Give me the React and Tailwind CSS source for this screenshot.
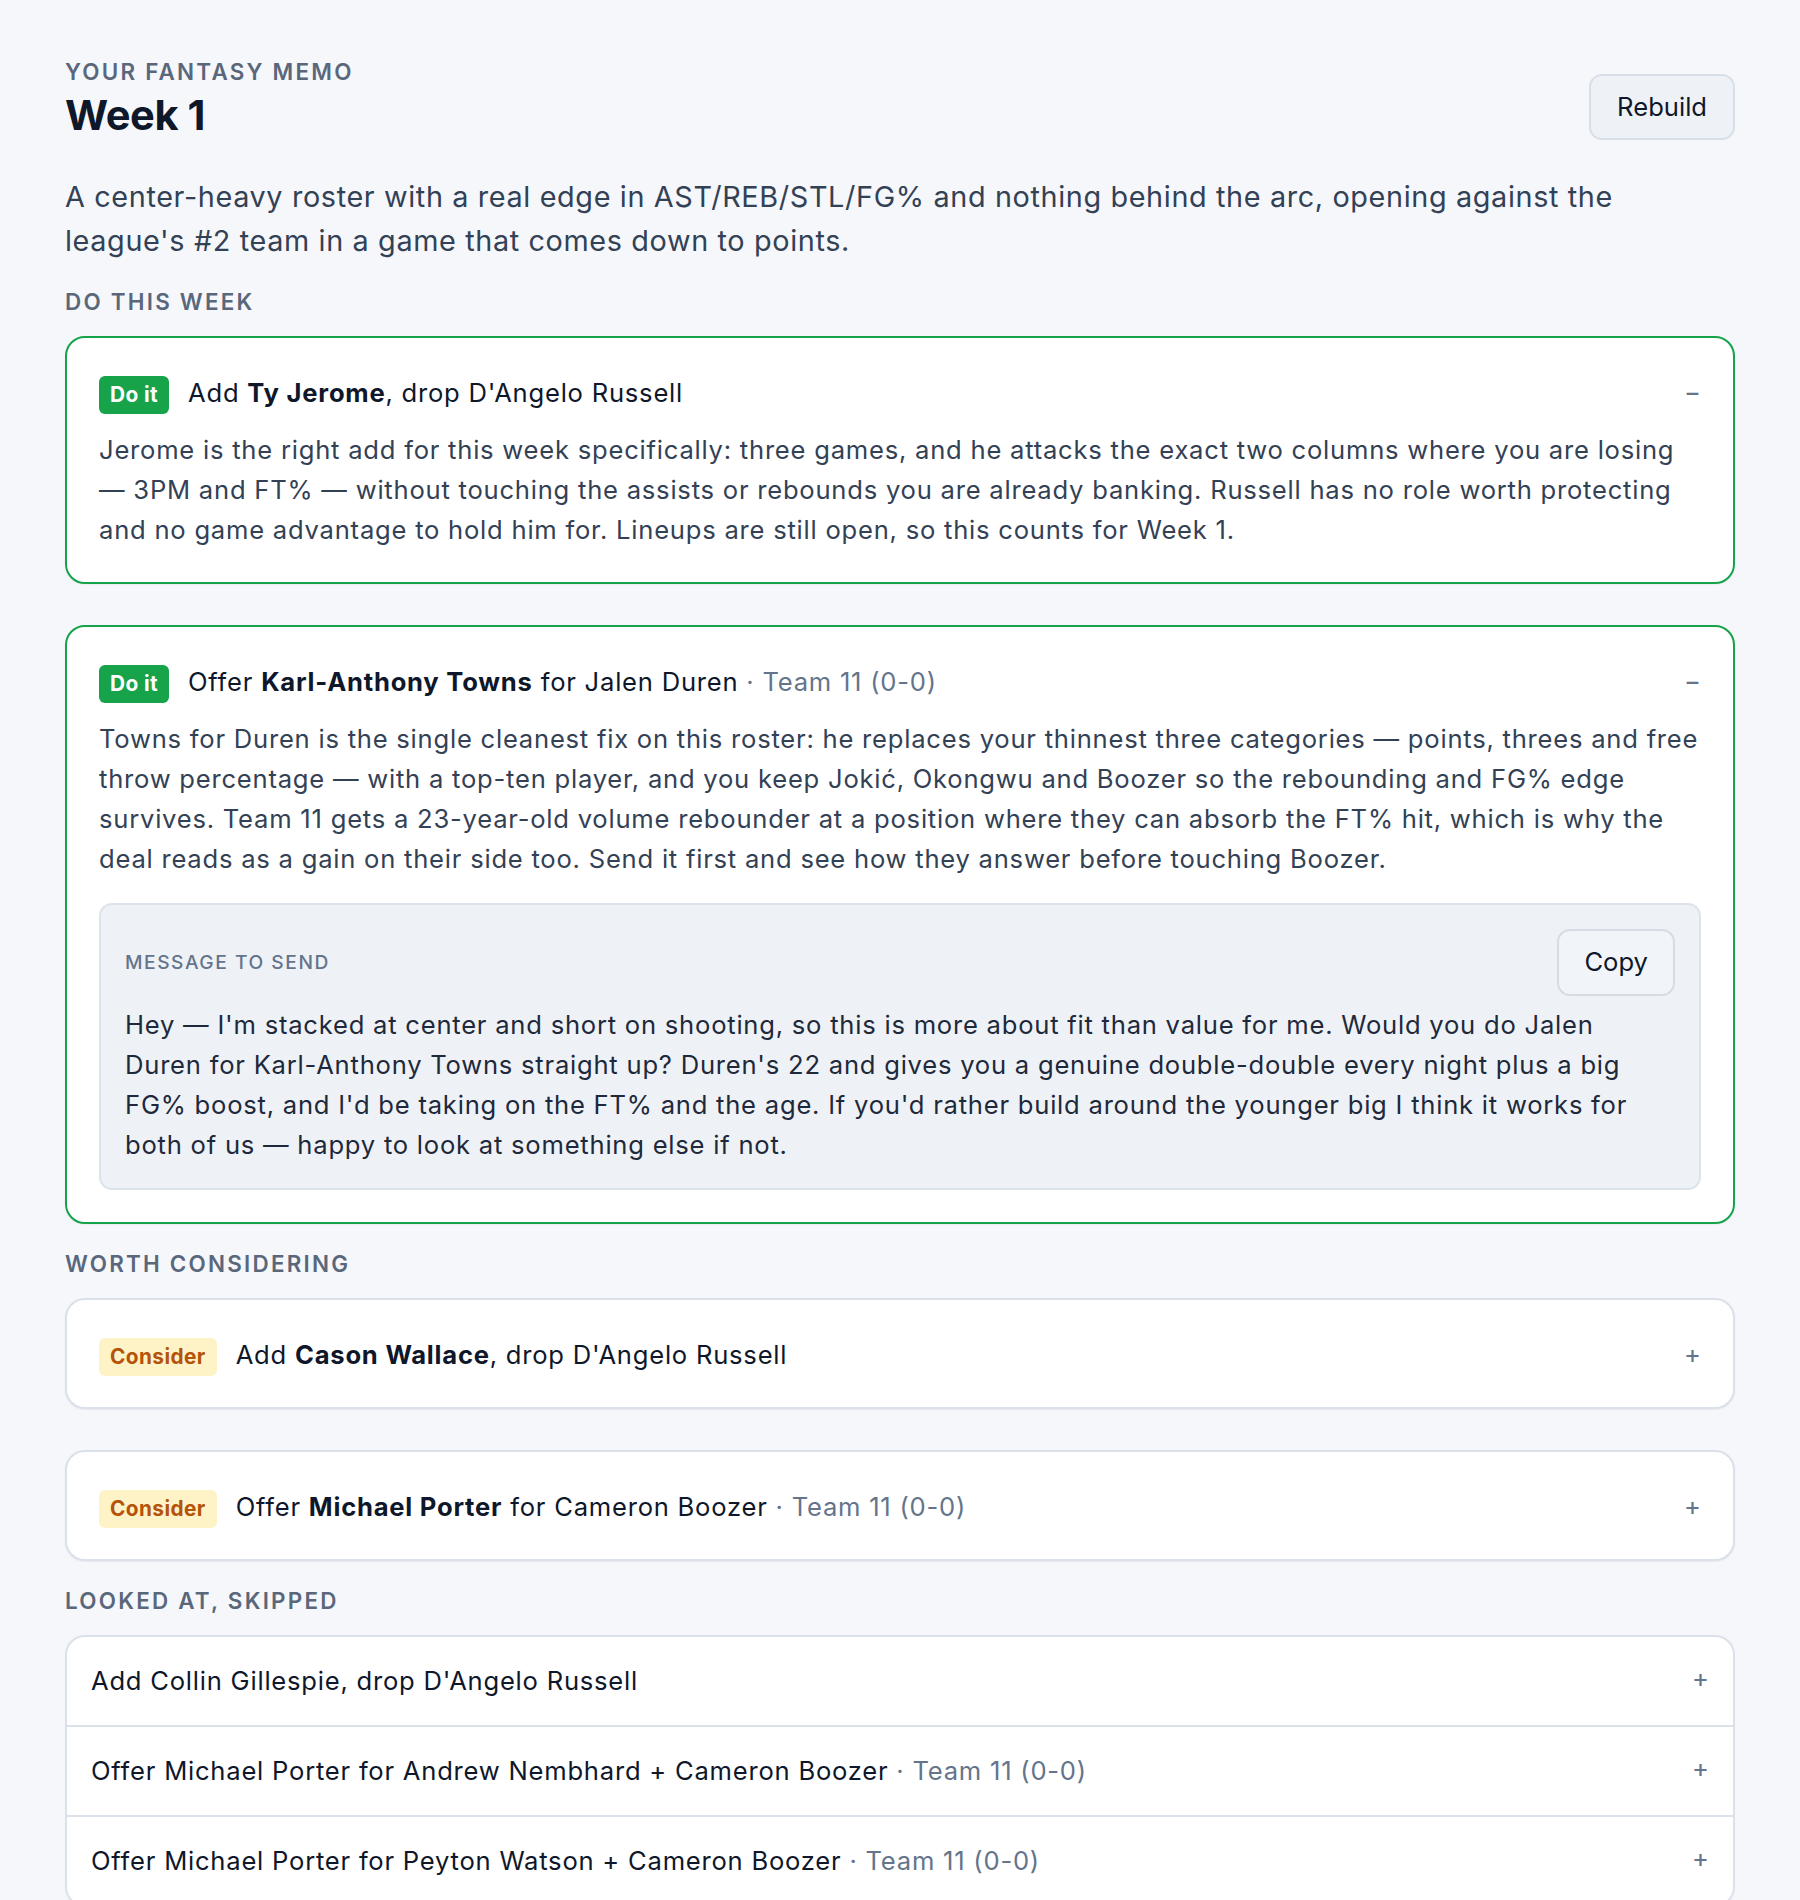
import React from "react";

const doThisWeek = [
  {
    id: "jerome",
    action: "Add",
    star: "Ty Jerome",
    rest: ", drop D'Angelo Russell",
    body: "Jerome is the right add for this week specifically: three games, and he attacks the exact two columns where you are losing — 3PM and FT% — without touching the assists or rebounds you are already banking. Russell has no role worth protecting and no game advantage to hold him for. Lineups are still open, so this counts for Week 1.",
  },
  {
    id: "towns",
    action: "Offer",
    star: "Karl-Anthony Towns",
    rest: " for Jalen Duren",
    team: "Team 11 (0-0)",
    body: "Towns for Duren is the single cleanest fix on this roster: he replaces your thinnest three categories — points, threes and free throw percentage — with a top-ten player, and you keep Jokić, Okongwu and Boozer so the rebounding and FG% edge survives. Team 11 gets a 23-year-old volume rebounder at a position where they can absorb the FT% hit, which is why the deal reads as a gain on their side too. Send it first and see how they answer before touching Boozer.",
    message:
      "Hey — I'm stacked at center and short on shooting, so this is more about fit than value for me. Would you do Jalen Duren for Karl-Anthony Towns straight up? Duren's 22 and gives you a genuine double-double every night plus a big FG% boost, and I'd be taking on the FT% and the age. If you'd rather build around the younger big I think it works for both of us — happy to look at something else if not.",
  },
];

const worthConsidering = [
  { id: "wallace", action: "Add", star: "Cason Wallace", rest: ", drop D'Angelo Russell" },
  { id: "porter", action: "Offer", star: "Michael Porter", rest: " for Cameron Boozer", team: "Team 11 (0-0)" },
];

const skipped = [
  { id: "gillespie", text: "Add Collin Gillespie, drop D'Angelo Russell" },
  { id: "nembhard", text: "Offer Michael Porter for Andrew Nembhard + Cameron Boozer", team: "Team 11 (0-0)" },
  { id: "watson", text: "Offer Michael Porter for Peyton Watson + Cameron Boozer", team: "Team 11 (0-0)" },
];

function SectionLabel({ children }) {
  return (
    <div className="mb-[18px] text-[22.4px] leading-[32px] font-semibold uppercase tracking-[0.1em] text-[#5a677b]">
      {children}
    </div>
  );
}

function Badge({ kind }) {
  if (kind === "do") {
    return (
      <span className="flex h-[38px] shrink-0 items-center rounded-[6px] bg-[#16a34a] px-[11px] text-[20.8px] font-bold tracking-[0.02em] text-white">
        Do it
      </span>
    );
  }
  return (
    <span className="flex h-[38px] shrink-0 items-center rounded-[6px] bg-[#fef3c7] px-[11px] text-[20.8px] font-bold tracking-[0.02em] text-[#b45309]">
      Consider
    </span>
  );
}

function Team({ team }) {
  if (!team) return null;
  return <span className="text-[#64748b]"> · {team}</span>;
}

function Header({ kind, item, open }) {
  return (
    <div className="flex h-[44px] items-center gap-[19px]">
      <Badge kind={kind} />
      <div className="-mt-[5px] flex-1 text-[25.6px] leading-[38px] tracking-[0.03em] text-[#0f172a]">
        {item.action} <span className="font-bold">{item.star}</span>
        {item.rest}
        <Team team={item.team} />
      </div>
      <span className="-mt-[6px] text-[25.6px] leading-none text-[#64748b]">{open ? "−" : "+"}</span>
    </div>
  );
}

function MessageBox({ text }) {
  return (
    <div className="mt-[24px] rounded-[13px] border-2 border-[#dde3ea] bg-[#eef2f6] px-[24px] pt-[24px] pb-[23px]">
      <div className="flex items-center justify-between">
        <span className="text-[19.2px] font-medium uppercase tracking-[0.08em] text-[#64748b]">
          Message to send
        </span>
        <button className="h-[67px] rounded-[13px] border-2 border-[#d5dce5] bg-[#f1f4f8] px-[25px] text-[25.6px] text-[#0f172a]">
          Copy
        </button>
      </div>
      <p className="mt-[9px] text-[25.6px] leading-[40px] tracking-[0.03em] text-[#1e293b]">{text}</p>
    </div>
  );
}

function OpenCard({ item }) {
  return (
    <div className="rounded-[20px] border-2 border-[#16a34a] bg-white px-[32px] pt-[35px] pb-[32px] shadow-[0_1px_2px_rgba(15,23,42,0.05)]">
      <Header kind="do" item={item} open />
      <p className="mt-[13px] text-[25.6px] leading-[40px] tracking-[0.03em] text-[#334155]">{item.body}</p>
      {item.message && <MessageBox text={item.message} />}
    </div>
  );
}

function ClosedCard({ item }) {
  return (
    <div className="rounded-[20px] border-2 border-[#dbe1e9] bg-white px-[32px] pt-[35px] pb-[28px] shadow-[0_1px_2px_rgba(15,23,42,0.06)]">
      <Header kind="consider" item={item} />
    </div>
  );
}

export default function App() {
  return (
    <div className="min-h-screen bg-[#f5f7fb] px-[65px] pt-[56px] pb-[64px] font-['Inter','Noto_Sans',sans-serif]">
      <div className="flex items-end justify-between">
        <div>
          <div className="text-[22.4px] leading-[32px] font-semibold uppercase tracking-[0.1em] text-[#5a677b]">
            Your fantasy memo
          </div>
          <h1 className="mt-[2px] text-[41.6px] leading-[50px] font-bold tracking-[-0.01em] text-[#0f172a]">
            Week 1
          </h1>
        </div>
        <button className="h-[66px] rounded-[13px] border-2 border-[#d8dfe8] bg-[#eef2f6] px-[26px] text-[25.6px] text-[#0f172a]">
          Rebuild
        </button>
      </div>

      <p className="mt-[35px] text-[28.8px] leading-[44px] tracking-[0.022em] text-[#334155]">
        A center-heavy roster with a real edge in AST/REB/STL/FG% and nothing behind the arc, opening against the
        league's #2 team in a game that comes down to points.
      </p>

      <section className="mt-[23px]">
        <SectionLabel>Do this week</SectionLabel>
        <div className="flex flex-col gap-[41px]">
          {doThisWeek.map((item) => (
            <OpenCard key={item.id} item={item} />
          ))}
        </div>
      </section>

      <section className="mt-[24px]">
        <SectionLabel>Worth considering</SectionLabel>
        <div className="flex flex-col gap-[41px]">
          {worthConsidering.map((item) => (
            <ClosedCard key={item.id} item={item} />
          ))}
        </div>
      </section>

      <section className="mt-[24px]">
        <SectionLabel>Looked at, skipped</SectionLabel>
        <div className="overflow-hidden rounded-[20px] border-2 border-[#dbe1e9] bg-white">
          {skipped.map((row, i) => (
            <div
              key={row.id}
              className={`flex items-center justify-between px-[24px] py-[25px] ${i > 0 ? "border-t-2 border-[#dbe1e9]" : ""}`}
            >
              <span className="text-[25.6px] leading-[38px] tracking-[0.03em] text-[#0f172a]">
                {row.text}
                <Team team={row.team} />
              </span>
              <span className="-mt-[6px] text-[25.6px] leading-none text-[#64748b]">+</span>
            </div>
          ))}
        </div>
      </section>
    </div>
  );
}
